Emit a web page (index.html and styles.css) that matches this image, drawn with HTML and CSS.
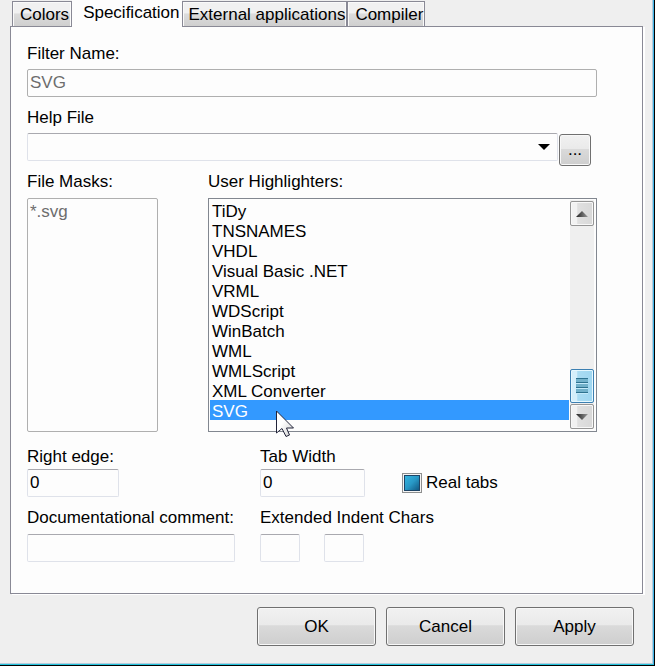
FILE: index.html
```html
<!DOCTYPE html>
<html lang="en">
<head>
<meta charset="utf-8">
<title>Filter settings</title>
<link rel="stylesheet" href="styles.css">
</head>
<body>
<form class="dialog">
  <div class="tabs" role="tablist">
    <button type="button" class="tab" role="tab">Colors</button>
    <button type="button" class="tab active" role="tab" aria-selected="true">Specification</button>
    <button type="button" class="tab" role="tab">External applications</button>
    <button type="button" class="tab" role="tab">Compiler</button>
  </div>
  <div class="panel" role="tabpanel">
    <div class="field">
      <label for="name">Filter Name:</label>
      <input class="box disabled" id="name" type="text" value="SVG" disabled>
    </div>
    <div class="field">
      <label for="help">Help File</label>
      <div class="help-row">
        <div class="combo">
          <select class="box" id="help"><option></option></select>
          <svg class="combo-arrow" width="12" height="6" viewBox="0 0 12 6" aria-hidden="true"><path d="M0 0H12L6 6Z"/></svg>
        </div>
        <button type="button" class="button browse">...</button>
      </div>
    </div>
    <div class="lists">
      <div class="field masks">
        <label for="masks">File Masks:</label>
        <textarea class="box disabled" id="masks" disabled>*.svg</textarea>
      </div>
      <div class="field highlighters">
        <label for="highlighters">User Highlighters:</label>
        <div class="listbox">
          <select id="highlighters" size="11">
            <option>TiDy</option>
            <option>TNSNAMES</option>
            <option>VHDL</option>
            <option>Visual Basic .NET</option>
            <option>VRML</option>
            <option>WDScript</option>
            <option>WinBatch</option>
            <option>WML</option>
            <option>WMLScript</option>
            <option>XML Converter</option>
            <option selected>SVG</option>
          </select>
          <div class="scrollbar">
            <button type="button" class="scroll-button" aria-label="Scroll up">
              <svg width="12" height="6" viewBox="0 0 12 6"><defs><linearGradient id="up"><stop stop-color="#222"/><stop offset="1" stop-color="#999"/></linearGradient></defs><path fill="url(#up)" d="M0 6L6 0L12 6Z"/></svg>
            </button>
            <div class="scroll-thumb">
              <svg width="12" height="16" viewBox="0 0 12 16" shape-rendering="crispEdges"><path fill="#72b1ca" d="M0 1H12V4H0ZM0 6H12V9H0ZM0 11H12V14H0Z"/><path fill="#2d7290" d="M0 0H12V1H0ZM0 4H12V5H0ZM0 9H12V10H0ZM0 14H12V15H0Z"/><path fill="#c4eafa" d="M0 5H12V6H0ZM0 10H12V11H0ZM0 15H12V16H0Z"/></svg>
            </div>
            <button type="button" class="scroll-button" aria-label="Scroll down">
              <svg width="12" height="6" viewBox="0 0 12 6"><defs><linearGradient id="down"><stop stop-color="#222"/><stop offset="1" stop-color="#999"/></linearGradient></defs><path fill="url(#down)" d="M0 0H12L6 6Z"/></svg>
            </button>
          </div>
          <svg class="pointer" width="19" height="28" viewBox="0 0 19 28" aria-hidden="true"><defs><linearGradient id="ptr" x2="1" y2="1"><stop offset=".4" stop-color="#fff"/><stop offset="1" stop-color="#ccc"/></linearGradient></defs><path fill="url(#ptr)" stroke="#22243a" d="M.5 1V23L6 18.500L10 26.500L13.500 25L10.500 18H17.500Z"/></svg>
        </div>
      </div>
    </div>
    <div class="options">
      <div class="field edge">
        <label for="edge">Right edge:</label>
        <input class="box" id="edge" type="text" value="0">
      </div>
      <div class="field width">
        <label for="tabwidth">Tab Width</label>
        <input class="box" id="tabwidth" type="text" value="0">
      </div>
      <label class="check"><input type="checkbox" checked>Real tabs</label>
    </div>
    <div class="options comments">
      <div class="field doc">
        <label for="doc">Documentational comment:</label>
        <input class="box" id="doc" type="text">
      </div>
      <div class="field indent">
        <label for="indent1">Extended Indent Chars</label>
        <div class="pair">
          <input class="box" id="indent1" type="text">
          <input class="box" type="text" aria-label="Second indent character">
        </div>
      </div>
    </div>
  </div>
  <div class="actions">
    <button type="submit" class="button">OK</button>
    <button type="button" class="button">Cancel</button>
    <button type="button" class="button">Apply</button>
  </div>
</form>
</body>
</html>
```
FILE: styles.css
```css
* {
  box-sizing: border-box;
}

body {
  margin: 0;
  background: #000;
}

body,
button,
input,
select,
textarea {
  font: 17px/20px "Liberation Sans", Arial, sans-serif;
  color: #000;
}

.dialog {
  display: flex;
  flex-direction: column;
  min-height: calc(100vh - 1px);
  margin-right: 1px;
  padding: 0 10px;
  background: #efefef;
  border-right: 1px solid #3fb4e6;
  border-bottom: 1px solid #22c3dc;
  box-shadow: inset -1px -1px #b5cbdc;
}

.tabs {
  display: flex;
  align-items: flex-end;
  height: 26px;
  padding-left: 2px;
}

.tab {
  height: 25px;
  padding: 2px 1px 0 6px;
  border: 1px solid #898995;
  border-bottom: 0;
  background: linear-gradient(#f1f1f1 45%, #dcdcdc 50%, #cfcfcf);
  box-shadow: inset 1px 1px #fafafa, inset -1px 0 #fafafa;
  white-space: nowrap;
}

.tab:first-child {
  padding: 2px 2px 0 7px;
}

.tab:last-child {
  padding-left: 7px;
}

.tab.active {
  position: relative;
  height: 27px;
  margin-bottom: -1px;
  padding: 0 2px 2px 11px;
  border: 0;
  background: #fdfdfd;
  box-shadow: none;
}

.panel {
  display: flex;
  flex-direction: column;
  padding: 17px 45px 31px 16px;
  border: 1px solid #898995;
  background: #fdfdfd;
  box-shadow: 2px 1px #fff;
}

.field {
  display: flex;
  flex-direction: column;
  gap: 5px;
  margin-bottom: 11px;
}

.box {
  width: 100%;
  height: 28px;
  margin: 0;
  padding: 0 2px;
  border: 1px solid #dfe2ea;
  border-top-color: #a9a9af;
  border-radius: 2px;
  background: #fdfdfd;
}

.box.disabled {
  border-color: #afafaf;
  color: #6d6d6d;
}

.help-row {
  display: flex;
  align-items: flex-start;
  gap: 1px;
  margin-right: 6px;
  margin-bottom: -5px;
}

.combo {
  position: relative;
  flex: 1;
  height: 28px;
}

.combo select {
  appearance: none;
}

.combo-arrow {
  position: absolute;
  top: 11px;
  right: 8px;
  pointer-events: none;
}

.button {
  width: 119px;
  height: 39px;
  padding: 0;
  border: 1px solid #707070;
  border-radius: 3px;
  background: linear-gradient(#f1f1f1, #eaeaea 45%, #dadada 48%, #cecece);
  box-shadow: inset 0 0 0 1px #f8f8f8;
}

.browse {
  width: 32px;
  height: 32px;
  margin-top: 1px;
}

.lists {
  display: flex;
  gap: 50px;
}

.lists .field {
  gap: 6px;
  margin-bottom: 15px;
}

.masks {
  width: 131px;
}

.masks .box {
  height: 234px;
  padding: 3px 2px;
  resize: none;
}

.highlighters {
  flex: 1;
}

.listbox {
  position: relative;
  display: flex;
  height: 234px;
  padding: 1px 2px 2px 1px;
  border: 1px solid #828790;
  background: #fdfdfd;
}

.listbox select {
  flex: 1;
  height: 100%;
  margin-right: 1px;
  padding: 0;
  border: 0;
  outline: 0;
  overflow: hidden;
  background: transparent;
}

.listbox option {
  height: 20px;
  min-height: 20px;
  padding: 2px 2px 0;
  line-height: 18px;
}

.listbox option:checked {
  background: linear-gradient(#39f, #39f);
  -webkit-text-fill-color: #fff;
}

.scrollbar {
  display: flex;
  flex-direction: column;
  width: 24px;
  padding-top: 1px;
  background: #efefef;
}

.scroll-button,
.scroll-thumb {
  display: flex;
  align-items: center;
  justify-content: center;
  height: 25px;
  padding: 0;
  border: 1px solid #959595;
  border-radius: 2px;
  background: linear-gradient(90deg, #f2f2f2 28%, #e0e0e0 30%, #d8d8d8);
  box-shadow: inset 0 0 0 1px #f8f8f8;
}

.scroll-thumb {
  height: 34px;
  margin: auto 0 1px;
  border-color: #3c7fb1;
  background: linear-gradient(90deg, #d5effb 28%, #aadcf3 30%, #9fd6f0);
  box-shadow: inset 0 0 0 1px #e6f8ff;
}

.pointer {
  position: absolute;
  top: 211px;
  left: 67px;
}

.options {
  display: grid;
  grid-template-columns: 233px 142px 1fr;
}

.options .field {
  gap: 2px;
}

.edge {
  width: 92px;
}

.width {
  width: 105px;
}

.check {
  display: flex;
  align-items: center;
  gap: 4px;
  height: 20px;
  margin-top: 26px;
}

.check input {
  appearance: none;
  width: 20px;
  height: 20px;
  margin: 0;
  border: 1px solid #8e8f8f;
  background: #f6f6f6;
}

.check input:checked {
  padding: 2px;
  background: linear-gradient(135deg, #35b5e0, #2898c6 50%, #125a85) content-box, #1d4466 padding-box;
  box-shadow: inset 0 0 0 1px #f4f4f4;
}

.comments .field {
  gap: 6px;
  margin-bottom: 0;
}

.doc {
  width: 208px;
}

.indent {
  grid-column: span 2;
}

.pair {
  display: flex;
  gap: 24px;
}

.pair .box {
  width: 40px;
}

.actions {
  display: flex;
  justify-content: flex-end;
  gap: 10px;
  padding: 13px 9px 17px;
}
```
